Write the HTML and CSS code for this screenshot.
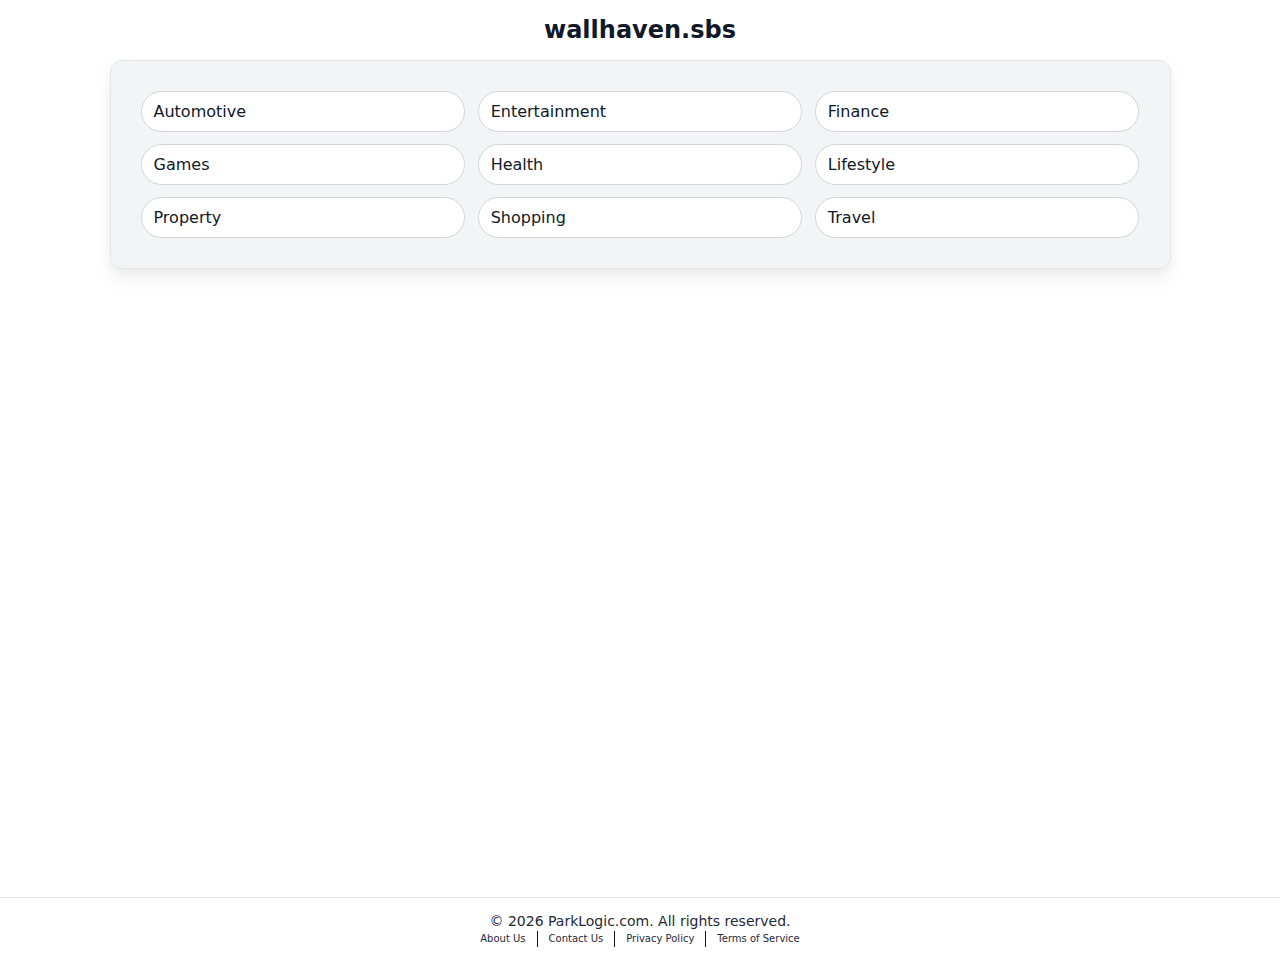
FILE: index.html
```html
<!DOCTYPE html>
<html lang="en">
<head>
<meta charset="utf-8">
<title>wallhaven.sbs</title>
<link rel="stylesheet" href="styles.css">
</head>
<body>
<main class="main">
  <h1 class="title">wallhaven.sbs</h1>
  <section class="panel">
    <a class="pill" href="#">Automotive</a>
    <a class="pill" href="#">Entertainment</a>
    <a class="pill" href="#">Finance</a>
    <a class="pill" href="#">Games</a>
    <a class="pill" href="#">Health</a>
    <a class="pill" href="#">Lifestyle</a>
    <a class="pill" href="#">Property</a>
    <a class="pill" href="#">Shopping</a>
    <a class="pill" href="#">Travel</a>
  </section>
</main>
<footer class="footer">
  <p class="copy">© 2026 ParkLogic.com. All rights reserved.</p>
  <nav class="links">
    <a href="#">About Us</a>
    <span class="sep"></span>
    <a href="#">Contact Us</a>
    <span class="sep"></span>
    <a href="#">Privacy Policy</a>
    <span class="sep"></span>
    <a href="#">Terms of Service</a>
  </nav>
</footer>
</body>
</html>
```
FILE: styles.css
```css
* { box-sizing: border-box; }
html, body { margin: 0; padding: 0; }
body {
  font-family: "DejaVu Sans", sans-serif;
  color: #111827;
  background: #fff;
  min-height: 100vh;
  display: flex;
  flex-direction: column;
}
.main {
  flex: 1;
  display: flex;
  flex-direction: column;
  align-items: center;
  padding-top: 16px;
}
.title {
  margin: 0 0 16px;
  font-size: 24px;
  line-height: 28px;
  font-weight: bold;
  color: #111827;
}
.panel {
  width: 1061px;
  background: #f3f4f6;
  border: 1px solid #e5e7eb;
  border-radius: 12px;
  box-shadow: 0 10px 20px rgba(0,0,0,0.06), 0 4px 8px rgba(0,0,0,0.03);
  padding: 30px;
  display: grid;
  grid-template-columns: repeat(3, 1fr);
  column-gap: 12.5px;
  row-gap: 12px;
}
.pill {
  display: flex;
  align-items: center;
  height: 41px;
  padding: 0 12px;
  background: #fff;
  border: 1px solid #d1d5db;
  border-radius: 999px;
  font-size: 16px;
  color: #111827;
  text-decoration: none;
}
.footer {
  border-top: 1px solid #e5e7eb;
  padding: 14px 0 13px;
  text-align: center;
}
.copy {
  margin: 0;
  font-size: 14px;
  line-height: 19px;
  color: #1f2937;
}
.links {
  display: flex;
  justify-content: center;
  align-items: center;
  gap: 11px;
  font-size: 10px;
  line-height: 16px;
}
.links a {
  color: #1f2937;
  text-decoration: none;
}
.sep {
  width: 0;
  height: 16px;
  border-left: 1.5px solid #111;
}
```
